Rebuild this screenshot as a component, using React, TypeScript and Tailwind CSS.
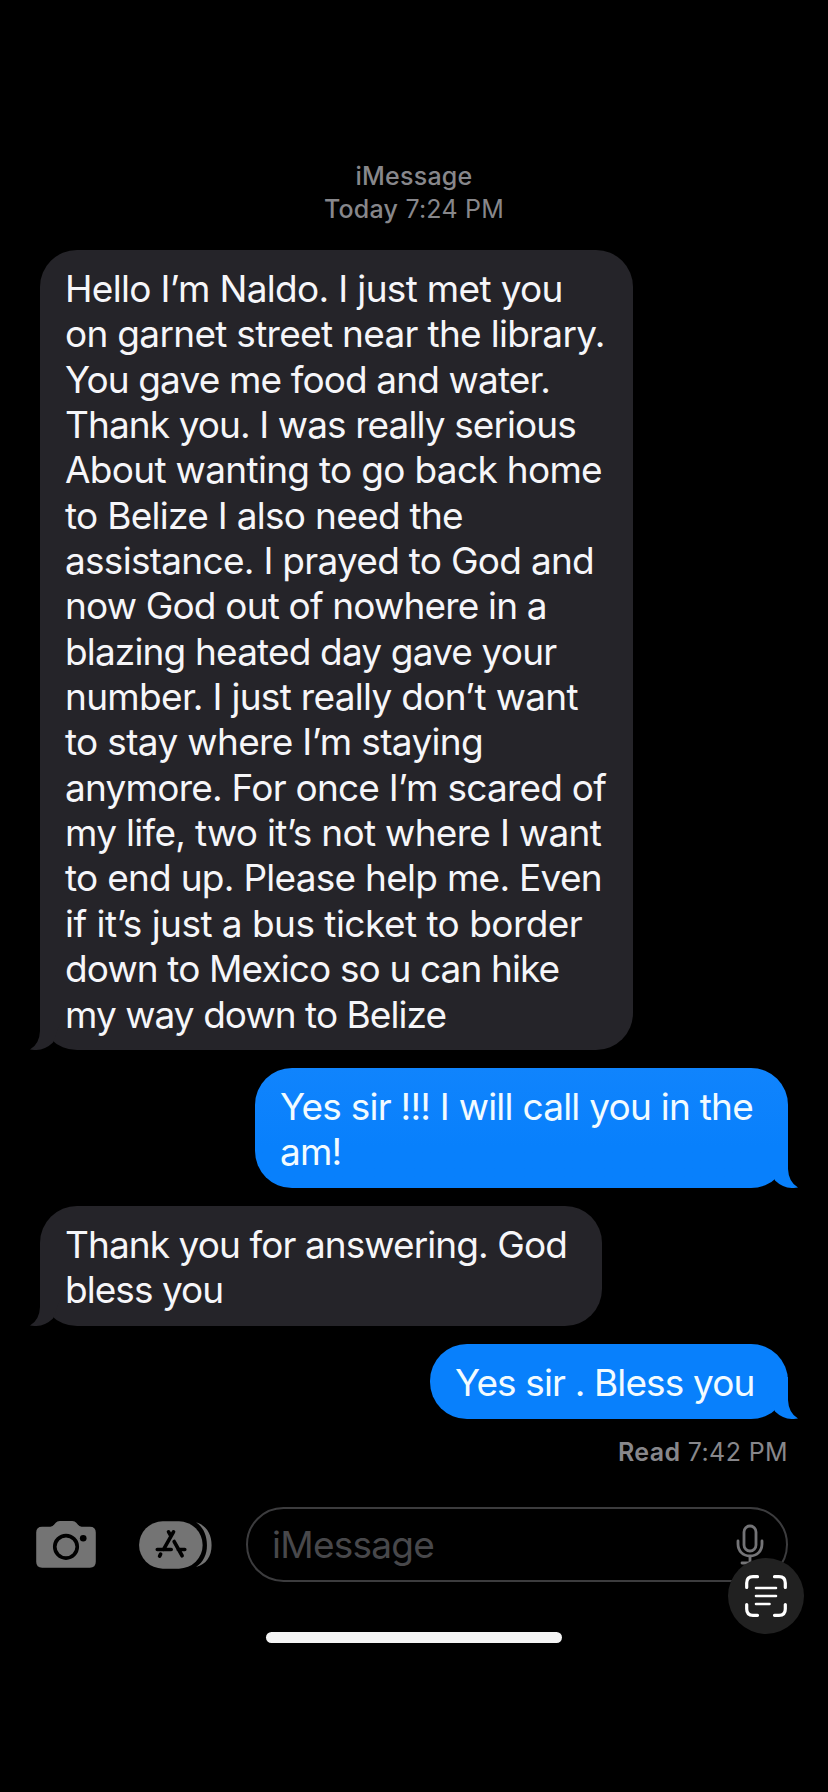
import React from "react";

type Line = { text: string; spacing: number };
type Message = { from: "them" | "me"; box: string; lines: Line[] };

const messages: Message[] = [
  {
    from: "them",
    box: "h-[800px] w-[593px] bg-[#252429]",
    lines: [
      { text: "Hello I’m Naldo. I just met you", spacing: -0.67 },
      { text: "on garnet street near the library.", spacing: -0.7 },
      { text: "You gave me food and water.", spacing: -0.87 },
      { text: "Thank you. I was really serious", spacing: -0.91 },
      { text: "About wanting to go back home", spacing: -0.69 },
      { text: "to Belize I also need the", spacing: -0.71 },
      { text: "assistance. I prayed to God and", spacing: -0.72 },
      { text: "now God out of nowhere in a", spacing: -0.83 },
      { text: "blazing heated day gave your", spacing: -0.84 },
      { text: "number. I just really don’t want", spacing: -0.7 },
      { text: "to stay where I’m staying", spacing: -0.66 },
      { text: "anymore. For once I’m scared of", spacing: -0.76 },
      { text: "my life, two it’s not where I want", spacing: -0.7 },
      { text: "to end up. Please help me. Even", spacing: -0.73 },
      { text: "if it’s just a bus ticket to border", spacing: -0.53 },
      { text: "down to Mexico so u can hike", spacing: -0.88 },
      { text: "my way down to Belize", spacing: -0.95 },
    ],
  },
  {
    from: "me",
    box: "h-[120px] w-[533px] bg-linear-to-b from-[#1084fd] to-[#0880fc] to-65%",
    lines: [
      { text: "Yes sir !!! I will call you in the", spacing: -0.76 },
      { text: "am!", spacing: -0.8 },
    ],
  },
  {
    from: "them",
    box: "h-[120px] w-[562px] bg-[#252429]",
    lines: [
      { text: "Thank you for answering. God", spacing: -0.92 },
      { text: "bless you", spacing: -0.95 },
    ],
  },
  {
    from: "me",
    box: "h-[75px] w-[358px] bg-[#0880fc]",
    lines: [{ text: "Yes sir . Bless you", spacing: -0.87 }],
  },
];

function Bubble({ message }: { message: Message }) {
  const mine = message.from === "me";
  return (
    <div
      className={`relative rounded-[37px] px-[25px] pt-[16px] text-[37px] leading-[45.35px] ${message.box} ${
        mine ? "self-end text-[#f2fbff]" : "self-start text-[#f6f6f9]"
      }`}
    >
      <svg
        viewBox="0 0 36 42"
        className={`absolute bottom-0 h-[42px] w-[36px] ${
          mine ? "-right-[10px] -scale-x-100 fill-[#0880fc]" : "-left-[10px] fill-[#252429]"
        }`}
      >
        <path d="M10 0V23Q9.500 36 0 41.500Q13 44 23 34.500L32 10V0Z" />
      </svg>
      {message.lines.map((line) => (
        <p key={line.text} className="relative whitespace-nowrap" style={{ letterSpacing: `${line.spacing}px` }}>
          {line.text}
        </p>
      ))}
    </div>
  );
}

function CameraIcon() {
  return (
    <svg viewBox="48 96 180 142" className="h-[47px] w-[60px]">
      <path
        fill="#747474"
        d="M66 113H91Q98 113 103 106L107 101Q111 96 119 96H157Q165 96 169 101L173 106Q178 113 185 113H210Q228 113 228 131V219Q228 237 210 237H66Q48 237 48 219V131Q48 113 66 113Z"
      />
      <circle cx="138" cy="174" r="34" fill="none" stroke="#000" strokeWidth="11" />
      <circle cx="190" cy="148" r="10" fill="#000" />
    </svg>
  );
}

function AppsIcon() {
  return (
    <svg viewBox="357 95 220 145" className="h-[48px] w-[73px]">
      <path fill="#747474" d="M529 99C561 108 576 136 576 168C576 201 560 226 529 234C551 219 562 196 562 168C562 139 551 113 529 99Z" />
      <rect x="357" y="96" width="192" height="143" rx="71.500" fill="#747474" />
      <g stroke="#000" strokeWidth="11" strokeLinecap="round" fill="none">
        <path d="M461 128L431 181M446 128L452 138M463 157L487 200M412 181H454M475 181H495M422 195L419 201" />
      </g>
    </svg>
  );
}

function MicIcon() {
  return (
    <svg viewBox="0 0 28 42" className="h-[42px] w-[28px]" fill="none" stroke="#747477" strokeWidth="2.800" strokeLinecap="round">
      <rect x="8" y="2" width="12" height="25" rx="6" />
      <path d="M2 17V20C2 27 7 32 14 32S26 27 26 20V17M14 32V39M6 39H22" />
    </svg>
  );
}

function ScanTextIcon() {
  return (
    <svg viewBox="0 0 42 42" className="h-[42px] w-[42px]" fill="none" stroke="#fff" strokeLinecap="round">
      <path strokeWidth="3.200" d="M1.700 12.500V8Q1.700 1.700 8 1.700H12.500M29.500 1.700H34Q40.300 1.700 40.300 8V12.500M40.300 29.500V34Q40.300 40.300 34 40.300H29.500M12.500 40.300H8Q1.700 40.300 1.700 34V29.500" />
      <path strokeWidth="2.600" d="M11 13H31M11 21H31M11 29H24.500" />
    </svg>
  );
}

export default function App() {
  return (
    <main className="flex h-[1792px] w-[828px] flex-col overflow-hidden bg-black font-['Inter','Liberation_Sans',sans-serif]">
      <header className="pt-[160px] text-center text-[25px] leading-[33px] tracking-[0.22px] text-[#87878b]">
        <p className="font-medium">iMessage</p>
        <p>
          <span className="font-medium">Today</span> 7:24 PM
        </p>
      </header>

      <section className="mt-[24px] flex flex-col gap-[18px] px-[40px]">
        {messages.map((message) => (
          <Bubble key={message.lines[0].text} message={message} />
        ))}
      </section>

      <p className="mt-[17px] pr-[40px] text-right text-[25px] leading-[33px] tracking-[0.38px] text-[#87878b]">
        <span className="font-semibold">Read</span> 7:42 PM
      </p>

      <footer className="mt-[38px] flex h-[75px] items-center pl-[36px]">
        <CameraIcon />
        <div className="ml-[43px]">
          <AppsIcon />
        </div>
        <div className="relative ml-[34px] flex h-[75px] w-[542px] items-center rounded-full border-2 border-[#3c3c3e] pl-[24px] text-[37px] tracking-[-0.75px] text-[#48484b]">
          <span className="grow">iMessage</span>
          <span className="mr-[22px]">
            <MicIcon />
          </span>
          <div className="absolute -right-[18px] top-[49px] flex h-[76px] w-[76px] items-center justify-center rounded-full bg-[#212121]">
            <ScanTextIcon />
          </div>
        </div>
      </footer>

      <div className="mt-[50px] ml-[266px] h-[11px] w-[296px] rounded-full bg-[#f4f4f4]" />
    </main>
  );
}
